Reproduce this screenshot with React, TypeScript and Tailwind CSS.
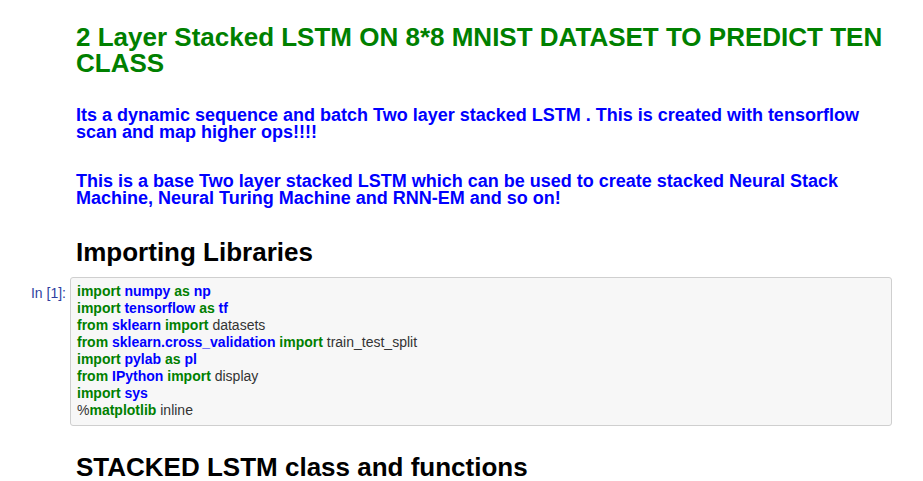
export default function App() {
  const G = ({ children }: { children: React.ReactNode }) => (
    <span className="font-bold text-[#008000]">{children}</span>
  );
  const B = ({ children }: { children: React.ReactNode }) => (
    <span className="font-bold text-[#0000ff]">{children}</span>
  );
  return (
    <div
      className="w-[923px] h-[481px] overflow-hidden bg-white"
      style={{ fontFamily: '"Liberation Sans", Arial, sans-serif' }}
    >
      <div className="pl-[76px] pr-[30px] pt-[24px]">
        <h1 className="text-[26px] leading-[26px] font-bold text-[#008000]">
          2 Layer Stacked LSTM ON 8*8 MNIST DATASET TO PREDICT TEN CLASS
        </h1>
        <p className="mt-[31px] text-[18px] leading-[17px] font-bold text-[#0000ff]">
          Its a dynamic sequence and batch Two layer stacked LSTM . This is created with tensorflow scan and map higher ops!!!!
        </p>
        <p className="mt-[32px] text-[18px] leading-[17px] font-bold text-[#0000ff]">
          This is a base Two layer stacked LSTM which can be used to create stacked Neural Stack Machine, Neural Turing Machine and RNN-EM and so on!
        </p>
        <h2 className="mt-[31px] text-[26px] leading-[28px] font-bold text-black">
          Importing Libraries
        </h2>
      </div>
      <div className="flex mt-[11px]">
        <div className="w-[70px] shrink-0 pr-[4px] pt-[8px] text-right text-[14px] leading-[17px] text-[#303f9f]">
          In&nbsp;[1]:
        </div>
        <div className="w-[822px] rounded-[3px] border border-[#cfcfcf] bg-[#f7f7f7] px-[6px] pt-[5px] pb-[6px] text-[14px] leading-[17px] text-[#333]">
          <div><G>import</G> <B>numpy</B> <G>as</G> <B>np</B></div>
          <div><G>import</G> <B>tensorflow</B> <G>as</G> <B>tf</B></div>
          <div><G>from</G> <B>sklearn</B> <G>import</G> datasets</div>
          <div><G>from</G> <B>sklearn.cross_validation</B> <G>import</G> train_test_split</div>
          <div><G>import</G> <B>pylab</B> <G>as</G> <B>pl</B></div>
          <div><G>from</G> <B>IPython</B> <G>import</G> display</div>
          <div><G>import</G> <B>sys</B></div>
          <div>%<G>matplotlib</G> inline</div>
        </div>
      </div>
      <div className="pl-[76px] mt-[28px]">
        <h2 className="text-[26px] leading-[26px] font-bold text-black">
          STACKED LSTM class and functions
        </h2>
      </div>
    </div>
  );
}
